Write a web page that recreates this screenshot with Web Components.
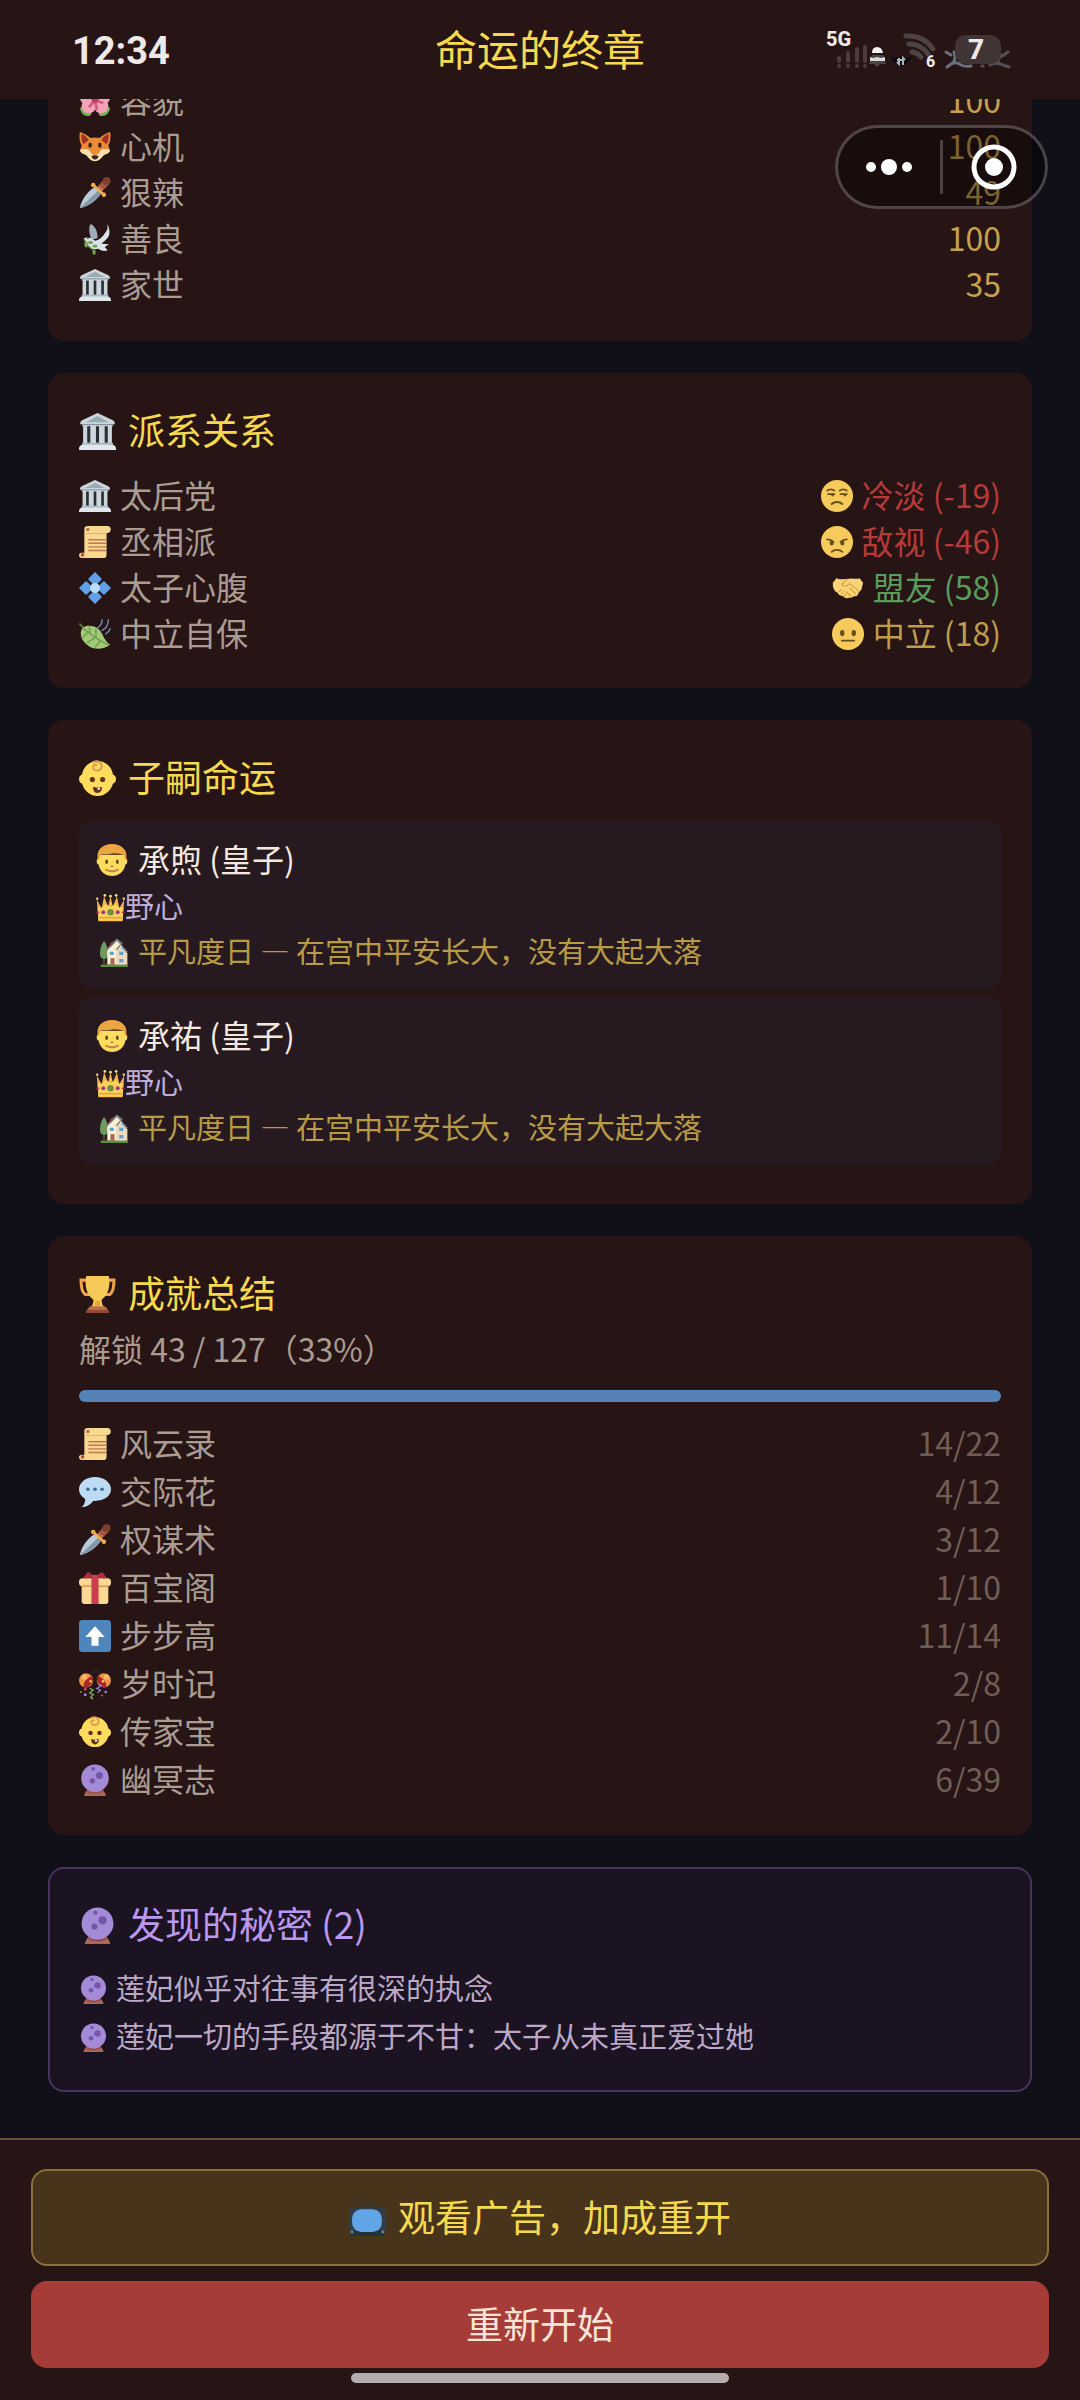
<!DOCTYPE html>
<html lang="zh-CN">
<head>
<meta charset="utf-8">
<meta name="viewport" content="width=device-width, initial-scale=1">
<title>命运的终章</title>
<style>
  html, body { margin: 0; height: 100%; }
  body {
    background: #110f18;
    color: #ab9c92;
    font-family: "Noto Sans CJK SC", "Noto Sans", sans-serif;
    font-size: 32px;
  }
</style>
</head>
<body>
<ending-page></ending-page>

<script>
const ICONS = {
  flower: `<path fill="#77b255" d="M1 26c4-3 9-1 12 2 2 3 1 7-3 7-5 0-8-4-9-9zm34 0c-4-3-9-1-12 2-2 3-1 7 3 7 5 0 8-4 9-9z"/><g fill="#f4a3bb"><circle cx="18" cy="8" r="8"/><circle cx="9" cy="14" r="8"/><circle cx="27" cy="14" r="8"/><circle cx="11" cy="24" r="8"/><circle cx="25" cy="24" r="8"/></g><path fill="none" stroke="#cf5a7e" stroke-width="3" stroke-linecap="round" d="M18 17l-6 7M18 17l8 3M18 17l2 10M18 17l-7-5M18 17l5-8"/><circle cx="18" cy="16" r="4" fill="#be3a60"/>`,
  fox: `<path fill="#ea8b38" d="M1 1c4 1 9 4 12 7 3-1 7-1 10 0 3-3 8-6 12-7 1 6 0 12-2 15l2 7-7 4-8 6h-4l-8-6-7-4 2-7C1 13 0 7 1 1z"/><path fill="#a3312a" d="M3 3c3 1 6 4 8 7l-6 5C3 12 2 7 3 3zm30 0c-3 1-6 4-8 7l6 5c2-3 3-8 2-12z"/><path fill="#fbe0ad" d="M1 21c4-1 8-1 11 1 1 3 3 5 6 5s5-2 6-5c3-2 7-2 11-1l-2 4-5 2c-3 4-6 7-10 7s-7-3-10-7l-5-2z"/><ellipse cx="12.500" cy="16" rx="2" ry="3" fill="#3a241c"/><ellipse cx="23.500" cy="16" rx="2" ry="3" fill="#3a241c"/><path fill="#3a241c" d="M14 28c2-1 6-1 8 0-1 3-2 4-4 4s-3-1-4-4z"/>`,
  dagger: `<path fill="#b9cbd8" d="M1 35C2 28 8 17 18 11l7 7C19 28 8 34 1 35z"/><path fill="#8598a8" d="M1 35l21-20 3 3C19 28 8 34 1 35z"/><path fill="#c1694f" d="M20 12l8-9 6 5-9 9z"/><path stroke="#8c4936" stroke-width="1.500" d="M23 8l6 5M25 6l6 5"/><circle cx="31" cy="4.500" r="4.500" fill="#7b3f2d"/><path fill="none" stroke="#efab4c" stroke-width="3" stroke-linecap="round" d="M16 9l12 11"/><circle cx="16" cy="9" r="2.500" fill="#efab4c"/><circle cx="28" cy="20" r="2.500" fill="#efab4c"/>`,
  dove: `<path fill="#9fadba" d="M13 1c5 2 8 8 8 16l-7 2C12 12 10 6 13 1z"/><path fill="#dce4ea" d="M32 1c3 7 3 12 0 16-2 3-5 5-7 6 3 0 6 1 9 1-2 1-3 2-5 3 1 1 2 2 3 4-4 1-8 0-10-2-7 2-13-2-14-8l-3-3c2-2 5-2 8-1l5 3c6-1 10-6 14-13z"/><circle cx="10" cy="17" r="1" fill="#2d3539"/><path fill="none" stroke="#5c913b" stroke-width="1.500" d="M6 18c1 6 5 9 12 14"/><g fill="#77a84f"><ellipse cx="8" cy="24" rx="2" ry="3.500"/><ellipse cx="13" cy="22" rx="3" ry="2"/><ellipse cx="17" cy="33" rx="1.800" ry="3"/><ellipse cx="18" cy="26" rx="3" ry="1.800"/></g>`,
  temple: `<path fill="#ccd6dd" d="M18 0l15 7q2 1 2 4H1Q1 8 3 7z"/><path fill="#99aab5" d="M18 3l11 6H7z"/><path fill="#a5b4c0" d="M3 11h30v2H3z"/><path fill="#ccd6dd" d="M4 12h28v18H4z"/><path fill="#292f33" d="M8 13h3v16H8zm8.500 0h3v16h-3zM25 13h3v16h-3z"/><path fill="#aab8c2" d="M3 29h30v3H3z"/><path fill="#e1e8ed" d="M0 35q0-3 3-4h30q3 1 3 4v1H0z"/>`,
  scroll: `<path fill="#f8d78f" d="M8 0h24c5 0 5 8 0 8h-1v24c0 3-1 4-4 4H3c-4 0-4-6 0-6h3V4c0-3 1-4 4-4z"/><path fill="#e0ae66" d="M8 8h23v1H8z"/><circle cx="10" cy="4" r="2" fill="#b97248"/><circle cx="4" cy="32.500" r="2" fill="#b0553a"/><path stroke="#bd7a52" stroke-width="1.600" d="M10.500 15.500h20M10.500 19.500h20M10.500 23.500h20M10.500 27.500h20"/>`,
  diamond: `<g fill="#5fa0e8"><path d="M18 0l7 7q1 1 0 2l-6 6h-2l-6-6q-1-1 0-2zM18 36l7-7q1-1 0-2l-6-6h-2l-6 6q-1 1 0 2zM0 18l7-7q1-1 2 0l6 6v2l-6 6q-1 1-2 0zM36 18l-7-7q-1-1-2 0l-6 6v2l6 6q1 1 2 0z"/></g><circle cx="18" cy="18" r="5.500" fill="#bddcf8"/>`,
  leaf: `<path fill="none" stroke="#5c7f3c" stroke-width="2" stroke-linecap="round" d="M1 7l5 5"/><path fill="#a2ca78" d="M2 17c0-6 5-9 12-8 8 1 11 6 14 13 2 4 4 6 7 8-8 6-18 6-25 1-5-4-8-8-8-14z"/><path fill="none" stroke="#72a04e" stroke-width="1.800" d="M4 11c10 8 18 15 29 19M12 17V9M19 22V12M10 16l-6 6M18 22l-9 6M24 26l-6 7"/><path fill="none" stroke="#7795bd" stroke-width="1.500" stroke-linecap="round" d="M26 2c0 4-2 7-5 9M33 2c0 6-3 10-7 12M35 12c-1 3-3 5-5 6"/>`,
  unamused: `<circle cx="18" cy="18" r="18" fill="#f7cb5b"/><path fill="none" stroke="#664d20" stroke-width="2" stroke-linecap="round" d="M7 12c2-2 6-2 8 0M21 12c2-2 6-2 8 0M8 16h7M22 16h7M12 27c3-3 9-3 12 0"/><circle cx="13" cy="17" r="1.500" fill="#664d20"/><circle cx="27" cy="17" r="1.500" fill="#664d20"/>`,
  angry: `<circle cx="18" cy="18" r="18" fill="#f7cb5b"/><ellipse cx="12" cy="19" rx="2.300" ry="3" fill="#664d20"/><ellipse cx="24" cy="19" rx="2.300" ry="3" fill="#664d20"/><path fill="none" stroke="#664d20" stroke-width="2" stroke-linecap="round" d="M7 15c3 0 5 1 7 3M29 15c-3 0-5 1-7 3M12 29c3-3 9-3 12 0"/>`,
  neutral: `<circle cx="18" cy="18" r="18" fill="#f7cb5b"/><ellipse cx="11.500" cy="17" rx="2.500" ry="3.500" fill="#664d20"/><ellipse cx="24.500" cy="17" rx="2.500" ry="3.500" fill="#664d20"/><path stroke="#664d20" stroke-width="2" stroke-linecap="round" d="M11 25.500h14"/>`,
  shake: `<path fill="#f9d478" d="M1 12l4-5c5 2 9 1 12 1 6-2 10 1 14-1l4 5-2 8-3 3c0 3-3 5-5 4-2 2-4 2-6 2-3 1-5 0-7-2-3 0-5-2-6-4-3-1-4-3-5-7z"/><path fill="none" stroke="#d39b36" stroke-width="1.200" stroke-linecap="round" stroke-linejoin="round" d="M17 8l-6 6c2 3 6 2 9-1l11 9M20 18l7 7M16 22l5 5M10 20l-2 2M13 22l-2 3M16 25l-2 2"/>`,
  baby: `<path fill="#ffdc5d" d="M18 1c8 0 14 6 15 13 4 1 4 8 0 9-2 7-8 12-15 12S5 30 3 23c-4-1-4-8 0-9C4 7 10 1 18 1z"/><path fill="none" stroke="#d99e52" stroke-width="2" stroke-linecap="round" d="M14 2c5-2 9 1 8 5-1 4-7 4-8 1-1-2 1-4 3-3"/><circle cx="13" cy="19" r="2.500" fill="#662f1c"/><circle cx="23" cy="19" r="2.500" fill="#662f1c"/><path fill="#662f1c" d="M14 26c2 1 6 1 8 0 1 3-1 6-4 6s-5-3-4-6z"/><path fill="#fff" d="M18 27h3l-1 2h-2z"/>`,
  boy: `<path fill="#ffdc5d" d="M3 12h30v4c3 0 3 7 0 7-1 8-8 13-15 13S4 31 3 23c-3 0-3-7 0-7z"/><path fill="#eda541" d="M2 17C0 6 8 0 18 0s18 6 16 17c-2 0-2-3-3-5-8-2-12-1-14-1-4 1-8 0-12 1-1 2-1 5-3 5z"/><ellipse cx="12" cy="20" rx="1.500" ry="2.500" fill="#594024"/><ellipse cx="24" cy="20" rx="1.500" ry="2.500" fill="#594024"/><path fill="none" stroke="#b8784d" stroke-width="1.800" stroke-linecap="round" d="M17 25h2M11 29c4 2 10 2 14 0"/>`,
  crown: `<path fill="#f4b548" d="M3 35l-2-27 6 11 3-15 5 13 3-13 3 13 5-13 3 15 6-11-2 27z"/><path fill="#ffd15c" d="M2 18l6 0 4-5 6 5 6-5 4 5 6 0-1 16H3z"/><g fill="#fbdc87"><circle cx="1.500" cy="7" r="1.500"/><circle cx="11" cy="3" r="1.700"/><circle cx="18" cy="4" r="1.700"/><circle cx="25" cy="3" r="1.700"/><circle cx="34.500" cy="7" r="1.500"/></g><path fill="#e59a35" d="M3 30h30v1.500H3z"/><circle cx="18" cy="24" r="4" fill="#718f40"/><circle cx="9" cy="24" r="2.500" fill="#9b3a94"/><circle cx="27" cy="24" r="2.500" fill="#9b3a94"/><circle cx="2.500" cy="24" r="1.500" fill="#c23d4a"/><circle cx="33.500" cy="24" r="1.500" fill="#c23d4a"/>`,
  house: `<path fill="#5c913b" d="M1 33h34v3H1z"/><path fill="#714f3c" d="M4 24h2v9H4z"/><path fill="#6c9c62" d="M5 4c3 3 5 10 5 15 0 5-2 7-5 7s-5-2-5-7C0 14 2 7 5 4z"/><path fill="#fff0d4" d="M9 33V15L21 3l11 12v18z"/><path fill="#ead9bd" d="M20 33V18l5-7 9 8v14z"/><path fill="none" stroke="#7e8791" stroke-width="2" d="M8 15L21 2l6 5-7 8M34 18l-7-7"/><path fill="#98413d" d="M12 7l4-3v3l-4 4z"/><g fill="#55a4d5"><path d="M12 17h5v4h-5zM24 17h5v4h-5zM24 26h5v4h-5z"/></g><path fill="#a9674b" d="M13 25h5v8h-5z"/>`,
  trophy: `<path fill="none" stroke="#efa44a" stroke-width="3" d="M9 4H2c0 7 1 12 4 14h7M27 4h7c0 7-1 12-4 14h-7"/><path fill="#f6ca58" d="M7 0h22c2 10-1 19-7 23 0 4 1 6 3 7H11c2-1 3-3 3-7C8 19 5 10 7 0z"/><path fill="#e8a244" d="M16 24h4l1 6h-6z"/><path fill="#bb704d" d="M10 30h16l2 3H8z"/><path fill="#8f4b34" d="M7 33h22v3H7z"/>`,
  speech: `<path fill="#bddcf3" d="M18 1c10 0 18 6 18 14s-8 13-18 13h-2c-3 4-8 7-13 7 3-2 4-6 4-9-4-3-7-6-7-11C0 7 8 1 18 1z"/><g fill="#376d97"><circle cx="10" cy="15" r="2"/><circle cx="18" cy="15" r="2"/><circle cx="26" cy="15" r="2"/></g>`,
  gift: `<path fill="#fbd992" d="M3 12h30v21q0 3-3 3H6q-3 0-3-3z"/><rect width="36" height="9" y="7" rx="4" fill="#fbd992"/><path fill="#df9e5c" d="M3 15h30v2H3z"/><path fill="#ad2e3d" d="M17 6C11 6 7 9 5 6l5-6 8 5 8-5 5 6c-2 3-6 0-12 0z"/><path fill="#ca3e4d" d="M14 4q4-2 8 0v32h-8z"/>`,
  up: `<rect width="36" height="36" rx="4" fill="#4c86bc"/><path fill="#fff" d="M18 7l11 12h-7v10h-8V19H7z"/>`,
  party: `<path fill="none" stroke="#2f3335" stroke-width="1" d="M18 1l-5 6M18 1l7 6"/><circle cx="8" cy="14" r="8" fill="#ee9246"/><circle cx="28" cy="14" r="8" fill="#ee9246"/><path fill="#a9242b" d="M15 9c3 6-3 14-9 13-3-4 3-11 9-13zm6 0c-3 6 3 14 9 13 3-4-3-11-9-13z"/><circle cx="6" cy="10" r="3" fill="#f8ba61"/><circle cx="31" cy="10" r="3" fill="#f8ba61"/><path fill="none" stroke="#71af58" stroke-width="1.500" d="M12 23l4 2-4 3 4 2-3 3 3 2"/><path fill="none" stroke="#957dd8" stroke-width="1.500" d="M22 18l3 2-5 3 4 2-3 3"/><g fill="#9f80e5"><circle cx="7" cy="30" r="1.700"/><circle cx="30" cy="27" r="1.500"/></g><g fill="#f4c362"><circle cx="13" cy="15" r="1.500"/><circle cx="27" cy="15" r="1.500"/></g><g fill="#d74a51"><circle cx="26" cy="31" r="1.200"/><circle cx="7" cy="24" r="1.500"/></g><circle cx="2" cy="27" r="1" fill="#77b255"/>`,
  crystal: `<path fill="#ad6851" d="M9 29h18l3 5q1 2-1 2H7q-2 0-1-2z"/><path fill="#77394f" d="M9 30c5 3 13 3 18 0v1c-5 3-13 3-18 0z"/><circle cx="18" cy="16" r="15.500" fill="#a48bd8"/><circle cx="23" cy="13" r="4" fill="#7655a8"/><circle cx="15" cy="19" r="3" fill="#7655a8"/><circle cx="16" cy="5.500" r="2" fill="#7655a8"/>`,
  tv: `<path fill="none" stroke="#33383a" stroke-width="1.200" d="M11 0l7 8 7-8"/><rect width="36" height="25" y="8" rx="5" fill="#313d46"/><path fill="#27313a" d="M2 31h32v5H2z"/><rect x="3" y="10" width="29" height="22" rx="9" fill="#62a5e7"/><circle cx="3" cy="32" r="1.500" fill="#5682ab"/><circle cx="33" cy="32" r="1.500" fill="#5682ab"/>`
};

/* Text beside a glyph sits a little above the middle of its line */
const LABEL = `.label { display: block; padding-bottom: 2px; margin-top: -2px; font-weight: 400; }`;

const define = (tag, render) => customElements.define(tag, class extends HTMLElement {
  connectedCallback() {
    if (!this.shadowRoot) this.attachShadow({ mode: "open" }).innerHTML = render(this);
  }
});

/* An emoji-like glyph, one em square */
define("glyph-icon", el => `
  <style>
    :host { display: block; flex: none; width: 1em; height: 1em; }
    svg { display: block; width: 100%; height: 100%; }
  </style>
  <svg viewBox="0 0 36 36" aria-hidden="true">${ICONS[el.getAttribute("name")]}</svg>`);

define("phone-status", () => `
  <style>
    :host { display: block; }
    svg { display: block; width: 186px; height: 44px; }
    text { font-family: Roboto, "Noto Sans", sans-serif; font-weight: 800; fill: #eee8e8; }
  </style>
  <svg viewBox="826 28 186 44" aria-hidden="true">
    <text x="826" y="46" font-size="20">5G</text>
    <g stroke="#4b3d3e" stroke-width="4" stroke-linecap="round">
      <path d="M839 58v3M848 53v8M857 49v12M865 47v14"/>
      <path d="M839 66h0M848 66h0M857 66h0M865 66h0"/>
    </g>
    <path fill="#4a4445" d="M872 55h11l3 9h-6q-3 5-6 0h-5z"/>
    <path fill="#f6f2f2" d="M872 53q0-6 5-6t6 6z"/>
    <path fill="#d7dcdd" d="M870 57l3 1 4-1 4 1 4-1v4h-15z"/>
    <path fill="#0d0a0d" d="M890 57l6 1q5-3 10 0l7-2-6 7q-6 7-12 0z"/>
    <path fill="none" stroke="#a8b6c4" stroke-width="2" d="M899 58v6l-2-2M903 65v-7l2 2M897 60h7"/>
    <g fill="none" stroke="#4e4243" stroke-width="5" stroke-linecap="round">
      <path d="M906 36q18-1 27 13M909 44q12 0 19 10M912 52q6 1 9 5"/>
    </g>
    <text x="926" y="67" font-size="16">6</text>
    <g fill="none" stroke="#69717b" stroke-width="3" stroke-linecap="round">
      <path d="M946 52l5 3M954 52q3 9-3 12l-4 3M951 64q6-3 10 1 4 2 10 1"/>
      <path d="M1008 52l-6 4-3-3M1001 56q-6 5-1 8l9 3M1000 64q-6-2-10 1M982 66h1" stroke="#575056"/>
    </g>
    <rect x="955" y="35" width="46" height="29" rx="11" fill="#403435"/>
    <text x="968" y="59" font-size="28">7</text>
  </svg>`);

define("top-bar", el => `
  <style>
    :host {
      display: grid; grid-template-columns: 1fr auto 1fr; align-items: center;
      flex: none; height: 99px; padding: 0 68px; background: #271415;
    }
    time { font: 700 38px/48px Roboto, "Noto Sans", sans-serif; color: #eee8e8; padding: 2px 4px 0; }
    h1 { margin: 0; font-size: 42px; line-height: 60px; font-weight: 400; color: #f6d94f; }
    phone-status { justify-self: end; }
    ${LABEL}
  </style>
  <time>12:34</time>
  <h1><span class="label"><slot></slot></span></h1>
  <phone-status></phone-status>`);

/* Floating mini-program menu */
define("menu-capsule", () => `
  <style>
    :host {
      position: fixed; top: 125px; right: 32px; display: flex; align-items: center;
      box-sizing: border-box; width: 213px; height: 84px; border-radius: 42px;
      border: 3px solid rgba(255,255,255,.24); background: rgba(0,0,0,.38);
    }
    button {
      flex: 1; display: grid; place-items: center; height: 100%;
      padding: 0; border: 0; background: none; cursor: pointer;
    }
    i { width: 3px; height: 54px; background: rgba(255,255,255,.22); }
    svg { display: block; }
  </style>
  <button type="button" aria-label="更多">
    <svg width="46" height="18" viewBox="0 0 46 18" fill="#fff"><circle cx="5" cy="9" r="5"/><circle cx="23" cy="9" r="8"/><circle cx="41" cy="9" r="5"/></svg>
  </button>
  <i></i>
  <button type="button" aria-label="关闭">
    <svg width="46" height="46" viewBox="0 0 46 46"><circle cx="23" cy="23" r="20" fill="none" stroke="#fff" stroke-width="5"/><circle cx="23" cy="23" r="9" fill="#fff"/></svg>
  </button>`);

define("info-card", el => `
  <style>
    :host {
      display: block; flex: none; box-sizing: border-box; padding: 31px;
      border-radius: 16px; background: #271415;
    }
    :host([tone="secret"]) { padding: 29px; border: 2px solid #48355f; background: #1b1222; }
    :host([scrolled]) { padding-bottom: 33px; }
    h2 {
      display: flex; align-items: center; gap: 12px; height: 54px; margin: 0 0 var(--head-gap, 15px);
      font-size: 37px; line-height: 54px; font-weight: 400; color: #f6d94f;
    }
    :host([tone="secret"]) h2 { color: #b998ee; }
    ${LABEL}
  </style>
  ${el.hasAttribute("heading") ? `<h2><glyph-icon name="${el.getAttribute("icon")}"></glyph-icon><span class="label">${el.getAttribute("heading")}</span></h2>` : ""}
  <slot></slot>`);

define("stat-row", el => {
  const mood = el.getAttribute("mood");
  return `
  <style>
    :host { display: flex; justify-content: space-between; line-height: var(--row, 46px); --tone: #c7a04f; }
    :host([tone="bad"]) { --tone: #b63a39; }
    :host([tone="good"]) { --tone: #589d5c; }
    :host([tone="even"]) { --tone: #bd9d49; }
    :host([tone="count"]) { --tone: #705e56; }
    .side { display: flex; align-items: center; gap: 9px; }
    .value { color: var(--tone); }
    ${LABEL}
  </style>
  <span class="side"><glyph-icon name="${el.getAttribute("icon")}"></glyph-icon><span class="label"><slot></slot></span></span>
  <span class="side value">${mood ? `<glyph-icon name="${mood}"></glyph-icon>` : ""}<span class="label">${el.getAttribute("value")}</span></span>`;
});

define("child-fate", el => `
  <style>
    :host { display: block; padding: 14px 17px; margin-bottom: 8px; border-radius: 14px; background: #261920; }
    div { display: flex; align-items: center; }
    .name { gap: 10px; line-height: 50px; color: #f4e9df; }
    .trait { font-size: 29px; line-height: 44px; color: #c0acd9; }
    .fate { font-size: 29px; line-height: 46px; gap: 9px; padding-left: 4px; color: #b99b45; }
    ${LABEL}
  </style>
  <div class="name"><glyph-icon name="boy"></glyph-icon><span class="label"><slot></slot></span></div>
  <div class="trait"><glyph-icon name="crown"></glyph-icon><span class="label">${el.getAttribute("trait")}</span></div>
  <div class="fate"><glyph-icon name="house"></glyph-icon><span class="label">${el.getAttribute("fate")}</span></div>`);

define("unlock-progress", el => `
  <style>
    :host { display: block; margin-bottom: 18px; }
    p { margin: 0 0 17px; line-height: 46px; }
    .track { height: 12px; border-radius: 6px; overflow: hidden; background: #3a2a2c; }
    .fill { height: 100%; width: 100%; background: #5583b7; }
    ${LABEL}
  </style>
  <p id="label"><span class="label"><slot></slot></span></p>
  <div class="track" role="progressbar" aria-labelledby="label"><div class="fill"></div></div>`);

define("secret-line", () => `
  <style>
    :host { display: flex; align-items: center; gap: 8px; font-size: 29px; line-height: 48px; color: #bba9c7; }
    ${LABEL}
  </style>
  <glyph-icon name="crystal"></glyph-icon><span class="label"><slot></slot></span>`);

define("action-button", el => `
  <style>
    :host { display: block; }
    button {
      display: flex; align-items: center; justify-content: center; gap: 12px;
      box-sizing: border-box; width: 100%; height: 87px; padding: 0; cursor: pointer;
      border: 0; border-radius: 16px; background: #a63c38;
      font: inherit; font-size: 37px; line-height: 54px; color: #fae4d6;
    }
    :host([kind="ad"]) button { height: 97px; border: 2px solid #89713d; background: #48331b; color: #f6d94f; }
    ${LABEL}
  </style>
  <button type="button">${el.hasAttribute("icon") ? `<glyph-icon name="${el.getAttribute("icon")}"></glyph-icon>` : ""}<span class="label"><slot></slot></span></button>`);

define("bottom-bar", () => `
  <style>
    :host {
      display: flex; flex-direction: column; flex: none; gap: 15px;
      padding: 29px 31px 17px; border-top: 2px solid #6d503a; background: #271415;
    }
    .home { width: 378px; height: 10px; margin: -10px auto 0; border-radius: 5px; background: #b3abad; }
  </style>
  <slot></slot>
  <div class="home"></div>`);

define("ending-page", () => `
  <style>
    :host { display: flex; flex-direction: column; height: 100vh; }
    main {
      flex: 1; min-height: 0; overflow: hidden; display: flex; flex-direction: column;
      justify-content: flex-end; gap: 32px; padding: 0 48px 46px;
    }
    .heirs { --head-gap: 16px; }
    .awards { --head-gap: 6px; --row: 48px; }
    .secrets { --head-gap: 13px; }
  </style>
  <top-bar>命运的终章</top-bar>
  <main>
    <info-card scrolled>
      <stat-row icon="flower" value="100">容貌</stat-row>
      <stat-row icon="fox" value="100">心机</stat-row>
      <stat-row icon="dagger" value="49">狠辣</stat-row>
      <stat-row icon="dove" value="100">善良</stat-row>
      <stat-row icon="temple" value="35">家世</stat-row>
    </info-card>
    <info-card icon="temple" heading="派系关系">
      <stat-row icon="temple" mood="unamused" tone="bad" value="冷淡 (-19)">太后党</stat-row>
      <stat-row icon="scroll" mood="angry" tone="bad" value="敌视 (-46)">丞相派</stat-row>
      <stat-row icon="diamond" mood="shake" tone="good" value="盟友 (58)">太子心腹</stat-row>
      <stat-row icon="leaf" mood="neutral" tone="even" value="中立 (18)">中立自保</stat-row>
    </info-card>
    <info-card class="heirs" icon="baby" heading="子嗣命运">
      <child-fate trait="野心" fate="平凡度日 — 在宫中平安长大，没有大起大落">承煦 (皇子)</child-fate>
      <child-fate trait="野心" fate="平凡度日 — 在宫中平安长大，没有大起大落">承祐 (皇子)</child-fate>
    </info-card>
    <info-card class="awards" icon="trophy" heading="成就总结">
      <unlock-progress>解锁 43 / 127（33%）</unlock-progress>
      <stat-row icon="scroll" tone="count" value="14/22">风云录</stat-row>
      <stat-row icon="speech" tone="count" value="4/12">交际花</stat-row>
      <stat-row icon="dagger" tone="count" value="3/12">权谋术</stat-row>
      <stat-row icon="gift" tone="count" value="1/10">百宝阁</stat-row>
      <stat-row icon="up" tone="count" value="11/14">步步高</stat-row>
      <stat-row icon="party" tone="count" value="2/8">岁时记</stat-row>
      <stat-row icon="baby" tone="count" value="2/10">传家宝</stat-row>
      <stat-row icon="crystal" tone="count" value="6/39">幽冥志</stat-row>
    </info-card>
    <info-card class="secrets" tone="secret" icon="crystal" heading="发现的秘密 (2)">
      <secret-line>莲妃似乎对往事有很深的执念</secret-line>
      <secret-line>莲妃一切的手段都源于不甘：太子从未真正爱过她</secret-line>
    </info-card>
  </main>
  <bottom-bar>
    <action-button kind="ad" icon="tv">观看广告，加成重开</action-button>
    <action-button>重新开始</action-button>
  </bottom-bar>
  <menu-capsule></menu-capsule>`);
</script>
</body>
</html>
